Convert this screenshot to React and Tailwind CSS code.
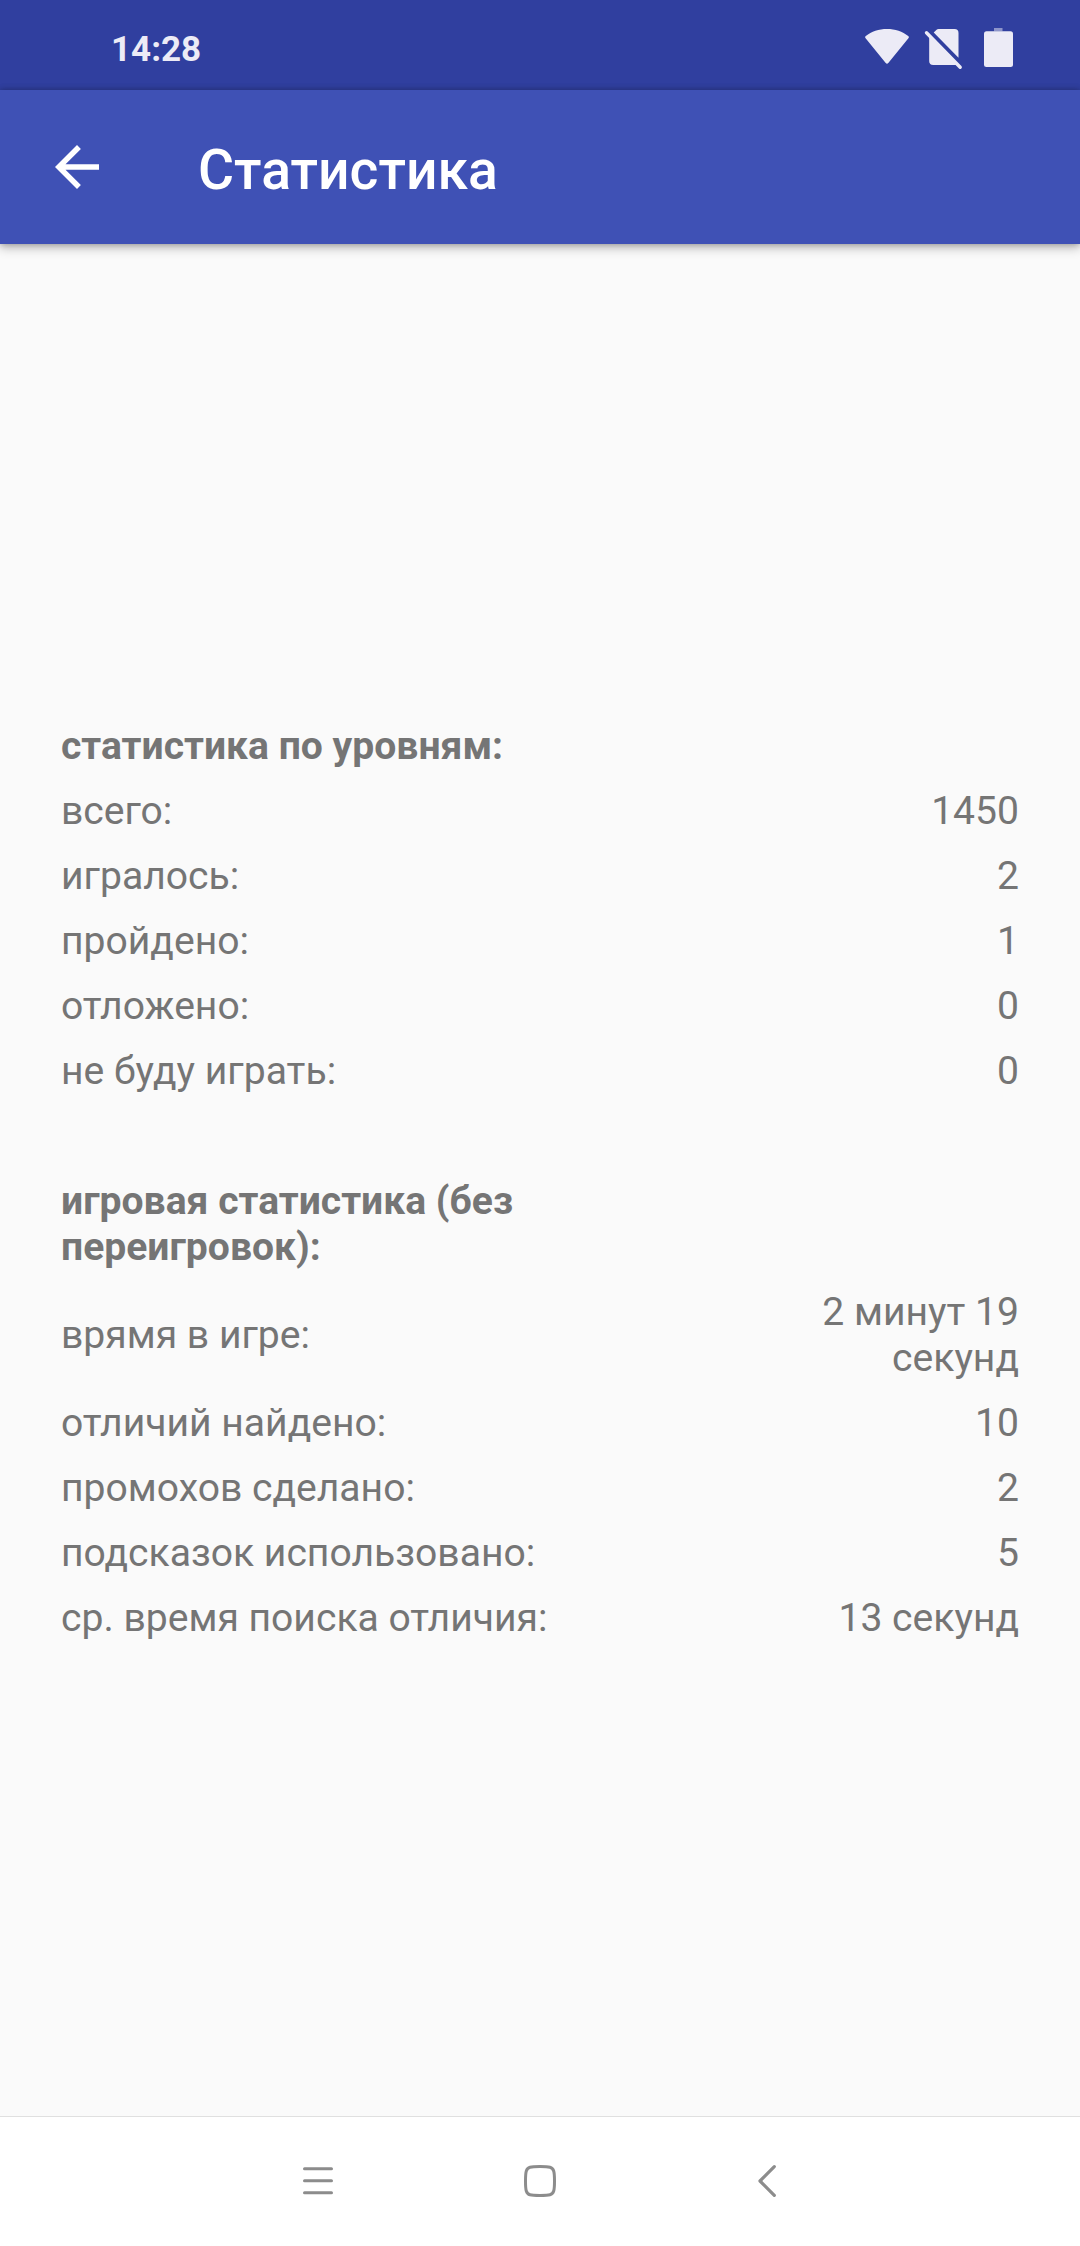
const levelStats = [
    { label: "всего:", value: "1450" },
    { label: "игралось:", value: "2" },
    { label: "пройдено:", value: "1" },
    { label: "отложено:", value: "0" },
    { label: "не буду играть:", value: "0" },
];

const gameStats = [
    { label: "врямя в игре:", value: "2 минут 19 секунд" },
    { label: "отличий найдено:", value: "10" },
    { label: "промохов сделано:", value: "2" },
    { label: "подсказок использовано:", value: "5" },
    { label: "ср. время поиска отличия:", value: "13 секунд" },
];

const StatusBar = () => (
    <div className="flex h-[90px] shrink-0 items-start justify-between bg-[#303f9f] pl-[111px] pr-[67px] text-[#ecebf6]">
        <span className="mt-[30px] text-[35px] leading-10 font-bold">14:28</span>
        <div className="mt-7 flex items-start">
            <svg width="44" height="42" viewBox="0 0 44 42" fill="currentColor">
                <path d="M.6 10.2C-.1 9.500 0 8.600.8 8 6.500 3.600 13.800 1 22 1s15.500 2.600 21.200 7c.8.6.9 1.500.2 2.200L23.300 35.100c-.8.9-1.800.9-2.600 0z" />
            </svg>
            <svg className="ml-[15px]" width="39" height="42" viewBox="0 0 39 42" fill="currentColor">
                <path d="M9.700 4.600 12.600 1.700Q13.300 1 14.500 1H30.500Q34.500 1 34.500 5V29.800z" />
                <path d="M5.200 8.500 33 37H9.200Q5.200 37 5.200 33z" />
                <path d="M2.500 4.800 36.200 39.200" stroke="currentColor" strokeWidth="3.400" strokeLinecap="round" />
            </svg>
            <svg className="ml-[21px]" width="29" height="42" viewBox="0 0 29 42" fill="currentColor">
                <rect x="10" y="0" width="8.500" height="3.300" opacity=".5" />
                <rect x="0" y="3.300" width="29" height="35.700" rx="2.500" />
            </svg>
        </div>
    </div>
);

const AppBar = () => (
    <header className="relative z-10 flex h-[154px] shrink-0 items-center bg-[#3f51b5] pl-11 text-white shadow-[0_4px_10px_rgba(0,0,0,0.25),0_0_6px_rgba(0,0,0,0.25)]">
        <svg width="66" height="66" viewBox="0 0 24 24" fill="currentColor">
            <path d="M20 11H7.830l5.590-5.590L12 4l-8 8 8 8 1.410-1.410L7.830 13H20v-2z" />
        </svg>
        <h1 className="mt-2 ml-[88px] text-[55.3px] leading-[64px] font-medium">Статистика</h1>
    </header>
);

const StatRow = ({ label, value }) => (
    <div className="flex items-center justify-between pb-[19px]">
        <span>{label}</span>
        <span className="max-w-[260px] text-right">{value}</span>
    </div>
);

const NavBar = () => (
    <nav className="flex h-[130px] shrink-0 items-center border-t border-[#e0e0e0] bg-white pb-0.5 pl-[302px] text-[#8c8c8c]">
        <svg width="32" height="34" viewBox="0 0 32 34" fill="none" stroke="currentColor" strokeWidth="3" strokeLinecap="round">
            <path d="M2.500 4.700h27M2.500 16.700h27M2.500 28.700h27" />
        </svg>
        <svg className="ml-[189px]" width="34" height="34" viewBox="0 0 34 34" fill="none" stroke="currentColor" strokeWidth="3">
            <path d="M17 2.500Q24.500 2.500 27 3.200 29.800 4 30.700 7 31.500 9.500 31.500 17T30.700 27Q29.800 30 27 30.800 24.500 31.500 17 31.500T7 30.800Q4.200 30 3.300 27 2.500 24.500 2.500 17T3.300 7Q4.200 4 7 3.200 9.500 2.500 17 2.500z" />
        </svg>
        <svg className="ml-[200px]" width="20" height="34" viewBox="0 0 20 34" fill="none" stroke="currentColor" strokeWidth="3.200" strokeLinecap="round" strokeLinejoin="round">
            <path d="M17.300 2.600 3 17l14.300 14.400" />
        </svg>
    </nav>
);

export default function App() {
    return (
        <div className="flex h-[2246px] w-[1080px] flex-col overflow-hidden bg-[#fafafa] font-[Roboto,sans-serif]">
            <StatusBar />
            <AppBar />
            <main className="flex flex-1 flex-col px-[61px] pt-[479px] text-[39.1px] leading-[46px] text-[#757575]">
                <section className="pb-[65px]">
                    <h2 className="pb-[19px] font-bold">статистика по уровням:</h2>
                    {levelStats.map((s) => (
                        <StatRow key={s.label} {...s} />
                    ))}
                </section>
                <section>
                    <h2 className="max-w-[500px] pb-[19px] font-bold">игровая статистика (без переигровок):</h2>
                    {gameStats.map((s) => (
                        <StatRow key={s.label} {...s} />
                    ))}
                </section>
            </main>
            <NavBar />
        </div>
    );
}
